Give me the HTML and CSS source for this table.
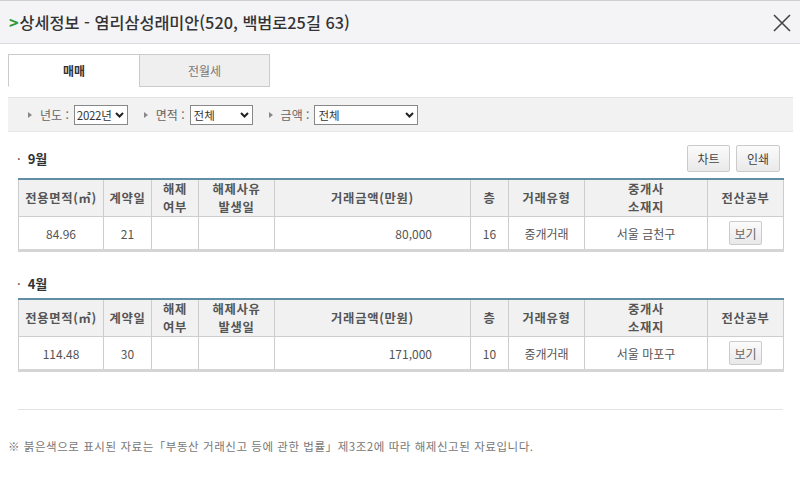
FILE: index.html
```html
<!DOCTYPE html>
<html lang="ko">
<head>
<meta charset="utf-8">
<link rel="stylesheet" href="styles.css">
</head>
<body>
<div class="titlebar">
  <h1 class="title"><span class="chev">&gt;</span>상세정보 - 염리삼성래미안(520, 백범로25길 63)</h1>
  <svg class="close" width="20" height="20" viewBox="0 0 20 20"><path d="M2 2L18 18M18 2L2 18" stroke="#444" stroke-width="1.6" fill="none"/></svg>
</div>
<div class="content">
  <div class="tabs">
    <div class="tab active">매매</div>
    <div class="tab">전월세</div>
  </div>
  <div class="filters">
    <label class="flt"><span class="tri"></span>년도 :</label>
    <select class="sel s1"><option>2022년</option></select>
    <label class="flt"><span class="tri"></span>면적 :</label>
    <select class="sel s2"><option>전체</option></select>
    <label class="flt"><span class="tri"></span>금액 :</label>
    <select class="sel s3"><option>전체</option></select>
  </div>
  <div class="sechead">
    <div class="month"><span class="dot">·</span>9월</div>
    <div class="btns"><button class="btn">차트</button><button class="btn">인쇄</button></div>
  </div>
  <table class="grid">
    <colgroup><col style="width:85px"><col style="width:48px"><col style="width:47px"><col style="width:76px"><col style="width:196px"><col style="width:38px"><col style="width:76px"><col style="width:123px"><col style="width:76px"></colgroup>
    <thead><tr><th>전용면적(㎡)</th><th>계약일</th><th>해제<br>여부</th><th>해제사유<br>발생일</th><th>거래금액(만원)</th><th>층</th><th>거래유형</th><th>중개사<br>소재지</th><th>전산공부</th></tr></thead>
    <tbody><tr><td>84.96</td><td>21</td><td></td><td></td><td class="amt">80,000</td><td>16</td><td>중개거래</td><td>서울 금천구</td><td><button class="view">보기</button></td></tr></tbody>
  </table>
  <div class="sechead second">
    <div class="month"><span class="dot">·</span>4월</div>
  </div>
  <table class="grid">
    <colgroup><col style="width:85px"><col style="width:48px"><col style="width:47px"><col style="width:76px"><col style="width:196px"><col style="width:38px"><col style="width:76px"><col style="width:123px"><col style="width:76px"></colgroup>
    <thead><tr><th>전용면적(㎡)</th><th>계약일</th><th>해제<br>여부</th><th>해제사유<br>발생일</th><th>거래금액(만원)</th><th>층</th><th>거래유형</th><th>중개사<br>소재지</th><th>전산공부</th></tr></thead>
    <tbody><tr><td>114.48</td><td>30</td><td></td><td></td><td class="amt">171,000</td><td>10</td><td>중개거래</td><td>서울 마포구</td><td><button class="view">보기</button></td></tr></tbody>
  </table>
  <hr class="sep">
  <p class="note">※ 붉은색으로 표시된 자료는「부동산 거래신고 등에 관한 법률」제3조2에 따라 해제신고된 자료입니다.</p>
</div>
</body>
</html>
```
FILE: styles.css
```css
html, body { margin: 0; padding: 0; background: #fff; }
body { font-family: "Noto Sans CJK KR", "Noto Sans", sans-serif; color: #555; width: 800px; height: 490px; overflow: hidden; }
.titlebar { background: #f4f4f6; border-top: 1px solid #cfcfd2; border-bottom: 1px solid #dcdcdf; display: flex; align-items: center; justify-content: space-between; padding: 0 8px 0 9px; box-sizing: border-box; height: 44px; }
.title { margin: 0; font-size: 16.3px; font-weight: 500; color: #333; letter-spacing: 0; }
.chev { color: #2f9a3b; font-weight: 700; margin-right: 1px; }
.close { display: block; margin-top: 2px; }
.content { padding: 10px 7px 0 8px; }
.tabs { display: flex; height: 33px; }
.tab { width: 131px; box-sizing: border-box; border: 1px solid #cbcbcb; background: #efefef; display: flex; align-items: center; justify-content: center; font-size: 12px; color: #777; }
.tab.active { background: #fff; border-bottom-color: #fff; color: #333; font-weight: 700; border-right: none; }
.filters { margin-top: 10px; height: 35px; background: #f2f2f2; border-top: 1px solid #e2e2e2; border-bottom: 1px solid #e6e6e6; display: flex; align-items: center; padding-left: 20px; box-sizing: border-box; font-size: 12px; color: #666; }
.flt { display: flex; align-items: center; margin-right: 5px; }
.tri { width: 0; height: 0; border-left: 4px solid #888; border-top: 3.5px solid transparent; border-bottom: 3.5px solid transparent; margin-right: 8px; }
.sel { -webkit-appearance: none; appearance: none; height: 20px; font-size: 11.5px; font-family: "Noto Sans CJK KR", sans-serif; border: 1px solid #888; background: #fff url("data:image/svg+xml,%3Csvg xmlns='http://www.w3.org/2000/svg' width='9' height='6' viewBox='0 0 9 6'%3E%3Cpath d='M1 1l3.5 3.5L8 1' stroke='%23222' stroke-width='2' fill='none'/%3E%3C/svg%3E") no-repeat right 3px center; color: #333; padding: 0 0 0 3px; margin-right: 16px; border-radius: 0; }
.s1 { width: 54px; padding-left: 2px; letter-spacing: -0.3px; }
.s2 { width: 63px; }
.s3 { width: 104px; }
.sechead { display: flex; justify-content: space-between; align-items: center; margin: 13px 13px 6px 9px; height: 27px; }
.sechead.second { margin-top: 16px; margin-bottom: 0; height: 30px; }
.month { font-size: 13px; font-weight: 700; color: #333; }
.dot { margin-right: 7px; font-weight: 400; }
.btns { display: flex; gap: 6px; }
.btn { height: 27px; padding: 0; border: 1px solid #cbcbcb; border-radius: 2px; background: linear-gradient(#fbfbfb, #e9e9e9); font-family: "Noto Sans CJK KR", sans-serif; font-size: 12px; color: #444; }
.btn:first-child { width: 43px; }
.btn:last-child { width: 44px; }
.grid { margin-left: 10px; width: 765px; border-collapse: collapse; table-layout: fixed; border-top: 2px solid #5f8ea5; border-bottom: 3px solid #d5d5d5; font-size: 12px; }
.grid th { background: #f1f1f1; height: 36px; font-weight: 700; font-size: 12.3px; color: #555; line-height: 18px; border-left: 1px solid #cdcdcd; border-right: 1px solid #cdcdcd; border-bottom: 1px solid #cdcdcd; padding: 0; letter-spacing: 0.7px; }
.grid td { height: 32px; text-align: center; color: #555; border: 1px solid #cdcdcd; border-top: none; padding: 0; }
.grid td.amt { text-align: right; padding-right: 38px; }
.view { width: 33px; height: 24px; border: 1px solid #cbcbcb; border-radius: 2px; background: linear-gradient(#fbfbfb, #e9e9e9); font-family: "Noto Sans CJK KR", sans-serif; font-size: 12px; color: #666; padding: 0; }
.sep { margin: 37px 10px 0 10px; border: none; border-top: 1px solid #e3e3e3; }
.note { margin: 28px 0 0 0; font-size: 11.5px; color: #777; letter-spacing: 0.55px; }
```
